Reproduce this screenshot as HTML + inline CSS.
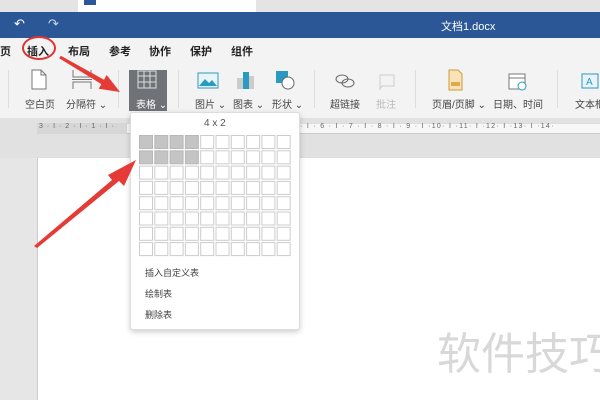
<!DOCTYPE html>
<html><head><meta charset="utf-8"><style>
*{margin:0;padding:0;box-sizing:border-box}
body{width:600px;height:400px;overflow:hidden;position:relative;background:#e6e6e6;font-family:"Liberation Sans","Noto Sans CJK SC",sans-serif;font-size:10px;color:#333}
.abs{position:absolute}
.t{position:absolute;font-size:10px;color:#444;white-space:nowrap}
.m{position:absolute;top:43px;font-size:11px;color:#222;font-weight:bold}
</style></head><body>
<div class="abs" style="left:0;top:0;width:600px;height:12px;background:#e4e4e4"></div>
<div class="abs" style="left:78px;top:0;width:178px;height:12px;background:#fff"></div>
<div class="abs" style="left:84px;top:0;width:12px;height:5px;background:#2b579a"></div>
<div class="abs" style="left:0;top:12px;width:600px;height:26px;background:#2b5797"></div>
<div class="t" style="left:14px;top:16px;color:#fff;font-size:13px">↶</div>
<div class="t" style="left:48px;top:16px;color:#c9d6ea;font-size:13px">↷</div>
<div class="t" style="left:441px;top:18px;color:#fff;font-size:11px">文档1.docx</div>
<div class="abs" style="left:0;top:38px;width:600px;height:80px;background:#f3f3f3"></div>
<div class="m" style="left:0">页</div>
<div class="m" style="left:27px">插入</div>
<div class="abs" style="left:22px;top:36px;width:34px;height:24px;border:2px solid #d33;border-radius:50%"></div>
<div class="m" style="left:68px">布局</div>
<div class="m" style="left:109px">参考</div>
<div class="m" style="left:149px">协作</div>
<div class="m" style="left:190px">保护</div>
<div class="m" style="left:231px">组件</div>
<div class="abs" style="left:8px;top:70px;width:1px;height:38px;background:#ddd"></div>
<div class="abs" style="left:118px;top:70px;width:1px;height:38px;background:#ddd"></div>
<div class="abs" style="left:178px;top:70px;width:1px;height:38px;background:#ddd"></div>
<div class="abs" style="left:314px;top:70px;width:1px;height:38px;background:#ddd"></div>
<div class="abs" style="left:415px;top:70px;width:1px;height:38px;background:#ddd"></div>
<div class="abs" style="left:557px;top:70px;width:1px;height:38px;background:#ddd"></div>
<div class="abs" style="left:129px;top:70px;width:38px;height:41px;background:#6f7276"></div>
<svg class="abs" style="left:0;top:66px" width="600" height="30">
<path d="M32 4h9l5 5v14H32z M41 4v5h5" fill="#fff" stroke="#777"/>
<path d="M73 4v7h18V4 M73 23v-7h18v7 M72 13.5h20" fill="none" stroke="#777"/>
<rect x="138" y="5" width="18" height="17" fill="none" stroke="#ddd"/>
<path d="M138 10h18M138 16h18M144 5v17M150 5v17" stroke="#ddd"/>
<rect x="198" y="7" width="20" height="15" fill="#e9f4f8" stroke="#2a9bc0"/>
<path d="M199 20l6-7 4 4 3-3 5 6z" fill="#2a9bc0"/>
<rect x="237" y="12" width="6" height="11" fill="#ccc"/><rect x="243" y="6" width="6" height="17" fill="#2a9bc0"/><rect x="249" y="10" width="5" height="13" fill="#ccc"/>
<rect x="276" y="5" width="12" height="12" fill="#2a9bc0"/><circle cx="288" cy="17" r="6" fill="#fff" stroke="#666"/>
<ellipse cx="342" cy="13" rx="6" ry="4" fill="none" stroke="#666"/><ellipse cx="348" cy="17" rx="6" ry="4" fill="none" stroke="#666"/>
<path d="M380 9h14v11h-12l-2 3z" fill="none" stroke="#ccc"/>
<path d="M449 4h9l4 4v16h-13z" fill="#f8e3b8" stroke="#d19a3a"/><rect x="451" y="16" width="9" height="4" fill="#e2a94a"/>
<rect x="509" y="8" width="16" height="15" fill="#fff" stroke="#777"/><path d="M509 12h16" stroke="#777"/><circle cx="522" cy="20" r="4" fill="#fff" stroke="#2a9bc0"/>
<rect x="582" y="8" width="16" height="14" fill="#eaf3f8" stroke="#2a9bc0"/><text x="586" y="19" font-size="10" fill="#2a9bc0" font-family="Liberation Sans">A</text>
</svg>
<div class="t" style="left:25px;top:96px">空白页</div>
<div class="t" style="left:66px;top:96px">分隔符 ⌄</div>
<div class="t" style="left:136px;top:96px;color:#fff">表格 ⌄</div>
<div class="t" style="left:195px;top:96px">图片 ⌄</div>
<div class="t" style="left:233px;top:96px">图表 ⌄</div>
<div class="t" style="left:272px;top:96px">形状 ⌄</div>
<div class="t" style="left:330px;top:96px">超链接</div>
<div class="t" style="left:376px;top:96px;color:#bbb">批注</div>
<div class="t" style="left:432px;top:96px">页眉/页脚 ⌄</div>
<div class="t" style="left:493px;top:96px">日期、时间</div>
<div class="t" style="left:575px;top:96px">文本框</div>
<div class="abs" style="left:0;top:118px;width:600px;height:40px;background:#e1e1e1"></div>
<div class="abs" style="left:37px;top:123px;width:563px;height:11px;background:#f7f7f7;border-top:1px solid #ddd;border-bottom:1px solid #ccc"></div>
<div class="abs" style="left:37px;top:123px;width:90px;height:11px;background:#d6d6d6"></div>
<div class="t" style="left:39px;top:123px;font-size:7px;color:#666;letter-spacing:1px">3 · I · 2 · I · 1 · I ·</div>
<div class="t" style="left:300px;top:123px;font-size:7px;color:#666;letter-spacing:1.3px">· I · 6 · I · 7 · I · 8 · I · 9 · I ·10· I ·11· I ·12· I ·13· I ·14·</div>
<div class="abs" style="left:37px;top:157px;width:563px;height:243px;background:#fff;border-left:1px solid #ccc;border-top:1px solid #ddd"></div>
<div class="t" style="left:437px;top:318px;font-size:44px;color:#d8d8d8;font-family:'Noto Sans CJK SC',sans-serif">软件技巧</div>
<div class="abs" style="left:130px;top:112px;width:170px;height:218px;background:#fff;border:1px solid #ddd;border-radius:3px;box-shadow:0 2px 6px rgba(0,0,0,.2)"></div>
<div class="t" style="left:204px;top:118px;font-size:10px;color:#555">4 x 2</div>
<svg class="abs" style="left:139px;top:135px" width="155" height="125" id="g"></svg>
<div class="t" style="left:145px;top:266px;font-size:9px;color:#444">插入自定义表</div>
<div class="t" style="left:145px;top:287px;font-size:9px;color:#444">绘制表</div>
<div class="t" style="left:145px;top:308px;font-size:9px;color:#444">删除表</div>
<svg class="abs" style="left:0;top:0" width="600" height="400">
<polygon points="34,246 112,180 108,175 136,160 124,186 119,181 37,248" fill="#e53a35"/>
<polygon points="60.8,55.7 104,79.7 106.7,75 120,92 98.7,88.8 101.4,84.1 59.2,58.3" fill="#e53a35"/>
</svg>
<script>
var s='';for(var r=0;r<8;r++)for(var c=0;c<10;c++){var f=(r<2&&c<4);s+='<rect x="'+(c*15.3+0.5)+'" y="'+(r*15.3+0.5)+'" width="13" height="13" fill="'+(f?'#c4c4c4':'#fff')+'" stroke="'+(f?'#b8b8b8':'#ccc')+'"/>';}
document.getElementById('g').innerHTML=s;
</script>
</body></html>
